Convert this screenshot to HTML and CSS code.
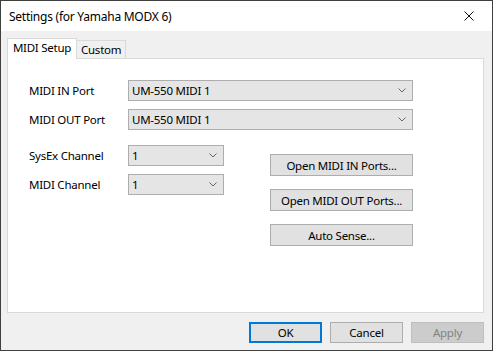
FILE: index.html
```html
<!DOCTYPE html>
<html lang="en">
<head>
    <meta charset="UTF-8">
    <title>Settings (for Yamaha MODX 6)</title>
    <link rel="stylesheet" href="styles.css">
</head>
<body>
    <div class="window">
        <div class="titlebar">
            <span class="title">Settings (for Yamaha MODX 6)</span>
            <span class="close">
                <svg width="10" height="10" viewBox="0 0 10 10"><path d="M0.5 0.5 L9.5 9.5 M9.5 0.5 L0.5 9.5" stroke="#111" stroke-width="1" fill="none"/></svg>
            </span>
        </div>
        <div class="content">
            <div class="tabs">
                <div class="tab active">MIDI Setup</div>
                <div class="tab">Custom</div>
            </div>
            <div class="panel">
                <div class="row">
                    <label>MIDI IN Port</label>
                    <div class="combo wide">UM-550 MIDI 1<svg class="arrow" width="8" height="5" viewBox="0 0 8 5"><path d="M0.5 0.5 L4 4 L7.5 0.5" stroke="#666" fill="none"/></svg></div>
                </div>
                <div class="row">
                    <label>MIDI OUT Port</label>
                    <div class="combo wide">UM-550 MIDI 1<svg class="arrow" width="8" height="5" viewBox="0 0 8 5"><path d="M0.5 0.5 L4 4 L7.5 0.5" stroke="#666" fill="none"/></svg></div>
                </div>
                <div class="lower">
                    <div class="left">
                        <div class="row">
                            <label>SysEx Channel</label>
                            <div class="combo small">1<svg class="arrow" width="8" height="5" viewBox="0 0 8 5"><path d="M0.5 0.5 L4 4 L7.5 0.5" stroke="#666" fill="none"/></svg></div>
                        </div>
                        <div class="row">
                            <label>MIDI Channel</label>
                            <div class="combo small">1<svg class="arrow" width="8" height="5" viewBox="0 0 8 5"><path d="M0.5 0.5 L4 4 L7.5 0.5" stroke="#666" fill="none"/></svg></div>
                        </div>
                    </div>
                    <div class="right">
                        <button class="btn side">Open MIDI IN Ports...</button>
                        <button class="btn side">Open MIDI OUT Ports...</button>
                        <button class="btn side">Auto Sense...</button>
                    </div>
                </div>
            </div>
            <div class="footer">
                <button class="btn dlg default">OK</button>
                <button class="btn dlg">Cancel</button>
                <button class="btn dlg disabled">Apply</button>
            </div>
        </div>
    </div>
</body>
</html>
```

FILE: styles.css
```css
body {
    margin: 0;
    font-family: "Noto Sans", "Open Sans", Arial, sans-serif;
    font-size: 11.5px;
    letter-spacing: -0.25px;
    color: #000;
    background-color: #f0f0f0;
}
.window {
    width: 493px;
    height: 351px;
    box-sizing: border-box;
    border: 1px solid #404040;
    display: flex;
    flex-direction: column;
    background-color: #f0f0f0;
}
.titlebar {
    height: 30px;
    background-color: #fff;
    display: flex;
    align-items: center;
    justify-content: space-between;
    padding-left: 8px;
    flex-shrink: 0;
}
.title {
    font-size: 12px;
}
.close {
    width: 46px;
    height: 30px;
    display: flex;
    align-items: center;
    justify-content: center;
}
.content {
    padding: 7px 8px 0 6px;
    flex: 1;
}
.tabs {
    display: flex;
    align-items: flex-end;
    height: 20px;
}
.tab {
    box-sizing: border-box;
    height: 18px;
    padding: 0 4px;
    border: 1px solid #d9d9d9;
    border-bottom: none;
    border-left: none;
    background-color: #f0f0f0;
    display: flex;
    align-items: center;
    white-space: nowrap;
    line-height: 1;
}
.tab.active {
    height: 21px;
    margin-bottom: -1px;
    width: 70px;
    justify-content: center;
    background-color: #fff;
    border-left: 1px solid #d9d9d9;
    padding: 0 0 3px 0;
    position: relative;
    z-index: 1;
}
.panel {
    box-sizing: border-box;
    height: 255px;
    border: 1px solid #d9d9d9;
    background-color: #fff;
    padding: 21px 0 0 21px;
}
.row {
    display: flex;
    align-items: center;
    height: 21px;
    margin-bottom: 8px;
}
.row label {
    width: 99px;
}
.combo {
    box-sizing: border-box;
    height: 21px;
    border: 1px solid #adadad;
    background-color: #e5e5e5;
    display: flex;
    align-items: center;
    justify-content: space-between;
    padding: 0 6px 0 3px;
}
.combo.wide {
    width: 285px;
}
.combo.small {
    width: 96px;
}
.lower {
    display: flex;
    margin-top: 15px;
}
.right {
    display: flex;
    flex-direction: column;
    gap: 13px;
    margin-left: 46px;
    padding-top: 9px;
}
.btn {
    font-family: inherit;
    font-size: 11.5px;
    letter-spacing: -0.25px;
    color: #000;
    box-sizing: border-box;
    height: 22px;
    border: 1px solid #adadad;
    background-color: #e1e1e1;
    padding: 0;
    margin: 0;
}
.btn.side {
    width: 143px;
}
.footer {
    display: flex;
    justify-content: flex-end;
    gap: 8px;
    padding-top: 9px;
}
.btn.dlg {
    width: 73px;
    height: 21px;
}
.btn.default {
    border: 2px solid #0078d7;
}
.btn.disabled {
    background-color: #cccccc;
    border-color: #bfbfbf;
    color: #838383;
}
```
